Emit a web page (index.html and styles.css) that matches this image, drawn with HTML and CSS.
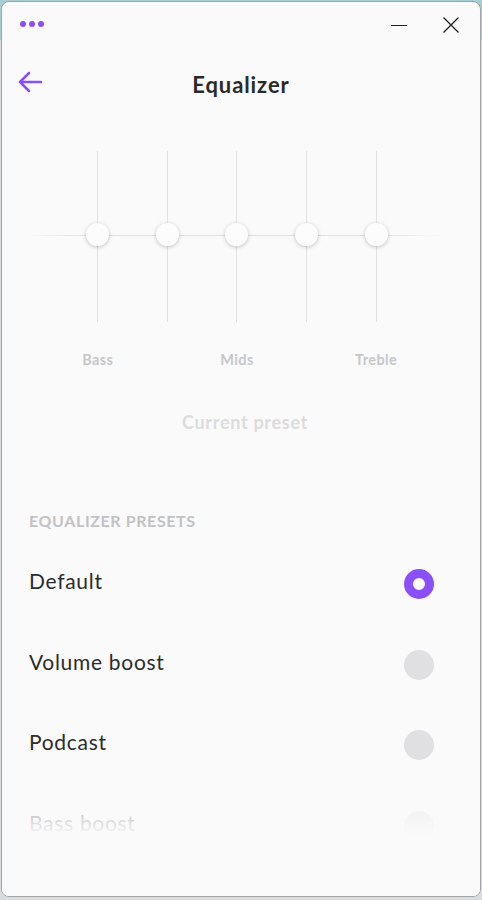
FILE: index.html
```html
<!DOCTYPE html>
<html>
<head>
<meta charset="utf-8">
<link rel="stylesheet" href="styles.css">
</head>
<body>
<div class="window">
  <div class="titlebar">
    <div class="dots"><span></span><span></span><span></span></div>
    <div class="controls">
      <svg class="min" width="18" height="18" viewBox="0 0 18 18"><path d="M1 9.5H17" stroke="#1f1f1f" stroke-width="1.2"/></svg>
      <svg class="close" width="18" height="18" viewBox="0 0 18 18"><path d="M1.5 1.5L16.5 16.5M16.5 1.5L1.5 16.5" stroke="#1f1f1f" stroke-width="1.3"/></svg>
    </div>
  </div>
  <div class="header">
    <svg class="back" width="26" height="24" viewBox="0 0 26 24"><path d="M24 12H3M12 3L3 12L12 21" fill="none" stroke="#8a4ff7" stroke-width="2.5" stroke-linecap="round" stroke-linejoin="round"/></svg>
    <h1>Equalizer</h1>
  </div>
  <div class="eq">
    <div class="hline"></div>
    <div class="sliders">
      <div class="slider"><div class="knob"></div></div>
      <div class="slider"><div class="knob"></div></div>
      <div class="slider"><div class="knob"></div></div>
      <div class="slider"><div class="knob"></div></div>
      <div class="slider"><div class="knob"></div></div>
    </div>
    <div class="labels">
      <span>Bass</span><span></span><span>Mids</span><span></span><span>Treble</span>
    </div>
  </div>
  <div class="current">Current preset</div>
  <div class="section">Equalizer presets</div>
  <div class="presets">
    <div class="row"><span>Default</span><span class="radio on"></span></div>
    <div class="row"><span>Volume boost</span><span class="radio"></span></div>
    <div class="row"><span>Podcast</span><span class="radio"></span></div>
    <div class="row"><span>Bass boost</span><span class="radio"></span></div>
    <div class="fade"></div>
  </div>
</div>
</body>
</html>
```
FILE: styles.css
```css
html, body {
  margin: 0;
  padding: 0;
  height: 900px;
  overflow: hidden;
}
body {
  background: linear-gradient(to bottom, #a7cdd6 0, #a7cdd6 40px, #d9dcde 40px, #d9dcde 100%);
  font-family: Lato, "Noto Sans", sans-serif;
}
.window {
  position: relative;
  margin: 1px 1px 0 1px;
  height: 896px;
  background: #fafafa;
  border: 1px solid #a3a3a3;
  border-radius: 8px;
  overflow: hidden;
  box-sizing: border-box;
}
.titlebar {
  height: 48px;
  display: flex;
  align-items: center;
  justify-content: space-between;
  padding: 0 20px 0 18px;
}
.dots {
  display: flex;
  gap: 3px;
  margin-top: -5px;
}
.dots span {
  width: 6px;
  height: 6px;
  border-radius: 50%;
  background: #8a4ff7;
}
.controls {
  display: flex;
  align-items: center;
  gap: 34px;
  margin-top: -3px;
}
.header {
  position: relative;
  height: 70px;
  display: flex;
  align-items: center;
  justify-content: center;
}
.back {
  position: absolute;
  left: 15px;
  top: 20px;
}
h1 {
  margin: 0;
  margin-top: -1px;
  font-size: 22px;
  font-weight: 700;
  color: #2a2a2a;
  letter-spacing: 0.9px;
}
.eq {
  position: relative;
  margin-top: 31px;
}
.hline {
  position: absolute;
  left: 24px;
  right: 38px;
  top: 84px;
  height: 1px;
  background: linear-gradient(to right, rgba(220,220,226,0), #dedee4 15%, #dedee4 85%, rgba(220,220,226,0));
}
.sliders, .labels {
  display: grid;
  grid-template-columns: repeat(5, 69.6px);
  margin-left: 61px;
}
.slider {
  height: 171px;
  display: flex;
  justify-content: center;
  position: relative;
}
.slider::before {
  content: "";
  width: 1px;
  height: 100%;
  background: #e3e3e6;
}
.knob {
  position: absolute;
  top: 72px;
  left: 50%;
  margin-left: -11.5px;
  width: 23px;
  height: 23px;
  border-radius: 50%;
  background: #fcfcfc;
  box-shadow: 0 1px 4px rgba(0,0,0,0.22);
}
.labels {
  margin-top: 29px;
}
.labels span {
  text-align: center;
  font-size: 14.5px;
  font-weight: 700;
  color: #c7c7ca;
  letter-spacing: 0.4px;
}
.current {
  margin-top: 43px;
  margin-left: 8px;
  text-align: center;
  font-size: 18px;
  font-weight: 700;
  color: #dcdcde;
  letter-spacing: 0.7px;
}
.section {
  margin-top: 78px;
  padding-left: 27px;
  font-size: 16px;
  font-weight: 700;
  text-transform: uppercase;
  color: #c2c2c5;
  letter-spacing: 0.6px;
}
.presets {
  position: relative;
  margin-top: 22px;
}
.row {
  height: 80.5px;
  display: flex;
  align-items: flex-start;
  justify-content: space-between;
  padding: 16px 46px 0 27px;
  box-sizing: border-box;
  font-size: 21px;
  color: #2c2c2c;
}
.row span:first-child {
  letter-spacing: 0.7px;
}
.radio {
  width: 30px;
  height: 30px;
  border-radius: 50%;
  background: #e0e0e3;
  box-sizing: border-box;
  margin-top: 1px;
}
.radio.on {
  background: #fff;
  border: 9px solid #8a4ff7;
}
.fade {
  position: absolute;
  left: 0;
  right: 0;
  top: 236px;
  height: 120px;
  background: linear-gradient(to bottom, rgba(250,250,250,0.45) 0, rgba(250,250,250,0.7) 20px, rgba(250,250,250,1) 48px);
}
```
